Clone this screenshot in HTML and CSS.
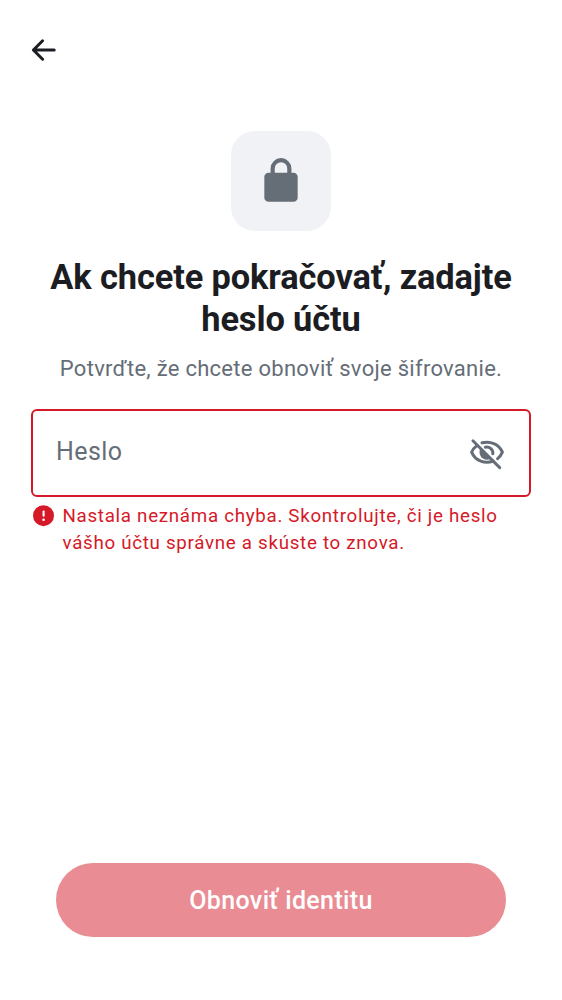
FILE: index.html
```html
<!DOCTYPE html>
<html lang="sk">
<head>
<meta charset="utf-8">
<title>Obnoviť identitu</title>
<link rel="stylesheet" href="styles.css">
</head>
<body>
<main class="screen">
  <header class="topbar">
    <svg class="back" viewBox="0 0 32 32"><path d="M15.6 6.8 6.4 16l9.2 9.2M6.4 16h20.8"/></svg>
  </header>
  <div class="tile">
    <svg class="lock" viewBox="0 0 24 24"><path d="M6 22q-.82 0-1.41-.59A1.93 1.93 0 0 1 4 20V10q0-.82.59-1.41Q5.18 8 6 8h1V6q0-2.07 1.46-3.54Q9.92 1 12 1q2.07 0 3.54 1.46Q17 3.93 17 6v2h1q.82 0 1.41.59Q20 9.18 20 10v10q0 .82-.59 1.41-.59.59-1.41.59zM9 8h6V6q0-1.25-.88-2.12A2.9 2.9 0 0 0 12 3q-1.25 0-2.12.88A2.9 2.9 0 0 0 9 6z"/></svg>
  </div>
  <h1 class="title">Ak chcete pokračovať, zadajte<br>heslo účtu</h1>
  <p class="subtitle">Potvrďte, že chcete obnoviť svoje šifrovanie.</p>
  <div class="field">
    <span class="placeholder">Heslo</span>
    <svg class="eye" viewBox="0 0 38 38">
      <path class="line" d="M14 8.8C22 6.8 30.8 9.8 34.4 18.2 33.3 20.8 31.7 23 29.6 24.7"/>
      <path class="line" d="M8.6 11.9C6.3 13.6 4.6 15.7 3.6 18.2 7.4 27.2 17 30.3 25.3 27"/>
      <path class="line" d="M17.4 13.2C21.6 12.3 25.4 15.6 24.8 19.8"/>
      <path class="pupil" d="M12.4 14.2C9.8 19.2 13 25.6 19 25.7q2 0 3.9-.9z"/>
      <path class="line slash" d="M4.9 6.8 31.7 33.6"/>
    </svg>
  </div>
  <div class="error">
    <svg class="alert" viewBox="0 0 26 26"><circle class="disc" cx="12.5" cy="12.7" r="10.5"/><path class="bar" d="M12.6 8.6v4.2"/><circle class="dot" cx="12.6" cy="16.8" r="1.3"/></svg>
    <p class="message">Nastala neznáma chyba. Skontrolujte, či je heslo<br>vášho účtu správne a skúste to znova.</p>
  </div>
  <button class="submit">Obnoviť identitu</button>
</main>
</body>
</html>
```
FILE: styles.css
```css
* { box-sizing: border-box; }
body { margin: 0; background: #fff; font-family: Roboto, sans-serif; }
.screen { display: flex; flex-direction: column; height: 1000px; padding: 34px 31px 62.6px; }
.topbar { height: 97px; margin-left: -4px; }
.back { display: block; width: 32px; height: 32px; fill: none; stroke: #1b1d22; stroke-width: 3; stroke-linecap: round; stroke-linejoin: round; }
.tile { display: flex; align-items: center; justify-content: center; align-self: center; width: 100px; height: 100px; border-radius: 24px; background: #f0f2f5; }
.lock { width: 50px; height: 50px; fill: #656d77; }
.title { margin: 25px 0 0; text-align: center; font-size: 34.4px; line-height: 42px; letter-spacing: -.12px; font-weight: 700; color: #1b1d22; white-space: nowrap; }
.subtitle { margin: 14px 0 0; text-align: center; font-size: 22px; line-height: 30px; letter-spacing: .28px; color: #656d77; white-space: nowrap; }
.field { display: flex; align-items: center; justify-content: space-between; height: 88px; margin-top: 25px; padding: 0 23px; border: 2px solid #d51928; border-radius: 6px; }
.placeholder { padding-bottom: 3px; font-size: 25px; letter-spacing: .4px; color: #656d77; }
.eye { width: 38px; height: 38px; }
.line { fill: none; stroke: #656d77; stroke-width: 3; stroke-linecap: round; stroke-linejoin: round; }
.slash { stroke-width: 2.9; }
.pupil { fill: #656d77; }
.error { display: flex; gap: 5.5px; margin-top: 6px; color: #d51928; }
.alert { width: 26px; height: 26px; }
.disc { fill: #d51928; }
.bar { fill: none; stroke: #fff; stroke-width: 2.1; stroke-linecap: round; }
.dot { fill: #fff; }
.message { margin: 0; font-size: 18.75px; line-height: 27px; letter-spacing: .7px; white-space: nowrap; }
.submit { margin: auto 25px 0; padding: 0; height: 74.8px; border: 0; border-radius: 38px; background: #ea8c94; color: #fff; font: 500 25px Roboto, sans-serif; letter-spacing: .37px; }
```
